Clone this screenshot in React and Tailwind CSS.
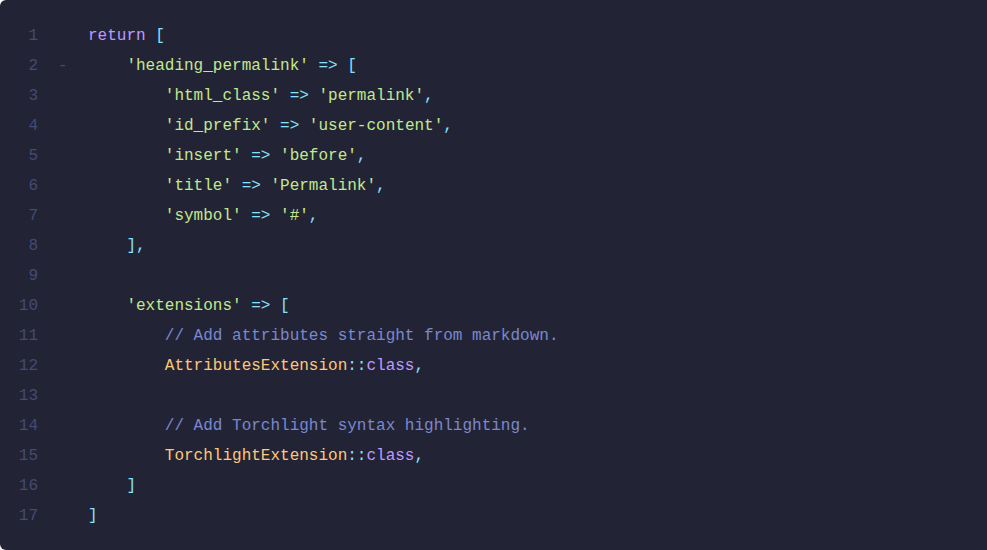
const C = {
  kw: "text-[#c099ff]",
  str: "text-[#c3e88d]",
  op: "text-[#86e1fc]",
  cm: "text-[#7a88cf]",
  cls: "text-[#ffc777]",
  txt: "text-[#c8d3f5]",
};

// each line: [marker, tokens[]]
const LINES = [
  ["", [["kw", "return"], ["txt", " "], ["op", "["]]],
  ["-", [["txt", "    "], ["str", "'heading_permalink'"], ["txt", " "], ["op", "=>"], ["txt", " "], ["op", "["]]],
  ["", [["txt", "        "], ["str", "'html_class'"], ["txt", " "], ["op", "=>"], ["txt", " "], ["str", "'permalink'"], ["op", ","]]],
  ["", [["txt", "        "], ["str", "'id_prefix'"], ["txt", " "], ["op", "=>"], ["txt", " "], ["str", "'user-content'"], ["op", ","]]],
  ["", [["txt", "        "], ["str", "'insert'"], ["txt", " "], ["op", "=>"], ["txt", " "], ["str", "'before'"], ["op", ","]]],
  ["", [["txt", "        "], ["str", "'title'"], ["txt", " "], ["op", "=>"], ["txt", " "], ["str", "'Permalink'"], ["op", ","]]],
  ["", [["txt", "        "], ["str", "'symbol'"], ["txt", " "], ["op", "=>"], ["txt", " "], ["str", "'#'"], ["op", ","]]],
  ["", [["txt", "    "], ["op", "]"], ["op", ","]]],
  ["", []],
  ["", [["txt", "    "], ["str", "'extensions'"], ["txt", " "], ["op", "=>"], ["txt", " "], ["op", "["]]],
  ["", [["txt", "        "], ["cm", "// Add attributes straight from markdown."]]],
  ["", [["txt", "        "], ["cls", "AttributesExtension"], ["op", "::"], ["kw", "class"], ["op", ","]]],
  ["", []],
  ["", [["txt", "        "], ["cm", "// Add Torchlight syntax highlighting."]]],
  ["", [["txt", "        "], ["cls", "TorchlightExtension"], ["op", "::"], ["kw", "class"], ["op", ","]]],
  ["", [["txt", "    "], ["op", "]"]]],
  ["", [["op", "]"]]],
];

const App = () => {
  return (
    <div className="bg-white w-[987px] h-[550px] overflow-hidden">
      <div
        className="bg-[#222436] h-full rounded-l-[6px] pt-[21px] text-[16px] leading-[30px]"
        style={{ fontFamily: '"Liberation Mono", "DejaVu Sans Mono", monospace' }}
      >
        {LINES.map(([marker, tokens], i) => (
          <div key={i} className="flex h-[30px] whitespace-pre">
            <span className="w-[38px] text-right text-[#444a73]">{i + 1}</span>
            <span className="ml-[20px] w-[10px] text-[#444a73]">{marker}</span>
            <span className="ml-[20px]">
              {tokens.map(([k, t], j) => (
                <span key={j} className={C[k]}>
                  {t}
                </span>
              ))}
            </span>
          </div>
        ))}
      </div>
    </div>
  );
};

export default App;
